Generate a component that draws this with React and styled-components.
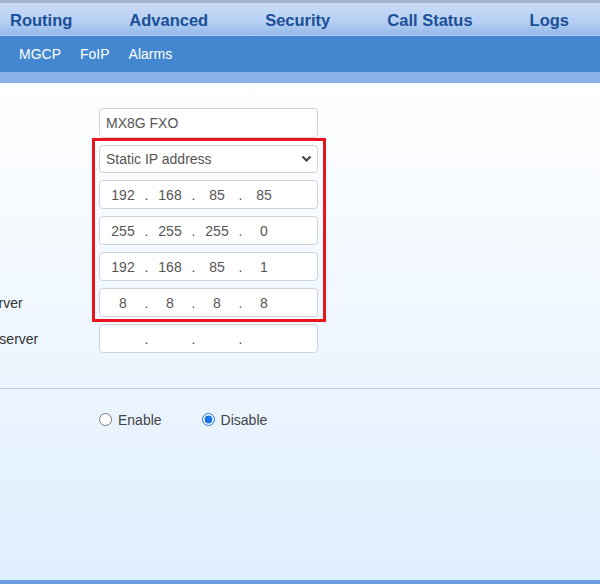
import React from "react";
import styled, { createGlobalStyle } from "styled-components";

const GlobalStyle = createGlobalStyle`
  html, body {
    margin: 0;
    padding: 0;
    height: 100%;
    overflow: hidden;
  }
  body {
    font-family: "Liberation Sans", Arial, sans-serif;
  }
  #root {
    height: 100%;
  }
`;

const topMenu = ["Routing", "Advanced", "Security", "Call Status", "Logs"];
const subMenu = ["MGCP", "FoIP", "Alarms"];

const Page = styled.div`
  display: flex;
  flex-direction: column;
  height: 100%;
  width: 100%;
  overflow: hidden;
  background: linear-gradient(#ffffff 80px, #dfeeff);
`;

const TopNav = styled.div`
  display: flex;
  align-items: center;
  gap: 57px;
  box-sizing: border-box;
  height: 36px;
  padding: 2px 0 0 10px;
  border-top: 3px solid #a3b3c9;
  border-bottom: 1px solid #b4cdef;
  background: linear-gradient(#c9dcf6, #b5cff2 60%, #93b8ea);
  white-space: nowrap;
`;

const TopItem = styled.div`
  font-family: "Liberation Sans", Arial, sans-serif;
  font-weight: 700;
  font-size: 16.5px;
  color: #1b4f98;
`;

const SubNav = styled.div`
  display: flex;
  align-items: center;
  gap: 19px;
  height: 36px;
  padding-left: 19px;
  background: #4287cf;
  border-bottom: 11px solid #8bb3e7;
`;

const SubItem = styled.div`
  font-size: 14px;
  color: #ffffff;
`;

const Content = styled.div`
  flex: 1;
  margin-left: -91px;
`;

const Section = styled.div`
  display: flex;
  flex-direction: column;
  gap: ${(p) => p.gap || 7}px;
  padding: ${(p) => p.pad};
`;

const Row = styled.div`
  display: grid;
  grid-template-columns: 190px 219px;
  align-items: center;
`;

const Label = styled.div`
  font-size: 14px;
  color: #333;
  white-space: nowrap;
  margin-left: ${(p) => p.shift || 0}px;
`;

const Field = styled.div`
  box-sizing: border-box;
  height: ${(p) => p.h || 29}px;
  display: flex;
  align-items: center;
  border: 1px solid #cfd3d8;
  border-radius: 4px;
  background: #fff;
  font-size: 14px;
  color: #555;
  padding-left: ${(p) => (p.ip ? 5 : 6)}px;
  padding-right: 5px;
`;

const SelectText = styled.span`
  flex: 1;
`;

const Octet = styled.span`
  width: 36px;
  text-align: center;
`;

const Dot = styled.span`
  width: 11px;
  text-align: center;
`;

const Highlight = styled.div`
  position: relative;
  display: flex;
  flex-direction: column;
  gap: 7px;
  &::after {
    content: "";
    position: absolute;
    left: 183px;
    width: 234px;
    top: -7px;
    bottom: -5px;
    box-sizing: border-box;
    border: 3px solid #e8141e;
    pointer-events: none;
  }
`;

const Divider = styled.div`
  height: 1px;
  background: #c9ced6;
  margin-left: 91px;
`;

const Radios = styled.div`
  display: flex;
  align-items: center;
  height: 29px;
`;

const RadioLabel = styled.label`
  display: flex;
  align-items: center;
  gap: 6px;
  font-size: 14px;
  color: #444;
  margin-right: ${(p) => p.mr || 0}px;
  input {
    margin: 0;
    width: 13px;
    height: 13px;
    accent-color: #1a73e8;
  }
`;

const BottomBar = styled.div`
  height: 4px;
  background: #6a9ddf;
`;

const Chevron = () => (
  <svg width="11" height="8" viewBox="0 0 11 8">
    <path d="M1.5 1.5 L5.5 5.5 L9.5 1.5" fill="none" stroke="#444" strokeWidth="2.2" />
  </svg>
);

const IpField = ({ parts }) => (
  <Field ip>
    {parts.map((p, i) => (
      <React.Fragment key={i}>
        {i > 0 && <Dot>.</Dot>}
        <Octet>{p}</Octet>
      </React.Fragment>
    ))}
  </Field>
);

const ipRows = [
  { parts: ["192", "168", "85", "85"] },
  { parts: ["255", "255", "255", "0"] },
  { parts: ["192", "168", "85", "1"] },
  { label: "Preferred DNS server", shift: -21, parts: ["8", "8", "8", "8"] },
];

export default function App() {
  return (
    <>
      <GlobalStyle />
      <Page>
        <TopNav>
          {topMenu.map((m) => (
            <TopItem key={m}>{m}</TopItem>
          ))}
        </TopNav>
        <SubNav>
          {subMenu.map((m) => (
            <SubItem key={m}>{m}</SubItem>
          ))}
        </SubNav>
        <Content>
          <Section pad="25px 0 35px 0">
            <Row>
              <Label />
              <Field h={30}>MX8G FXO</Field>
            </Row>
            <Highlight>
              <Row>
                <Label />
                <Field h={28}>
                  <SelectText>Static IP address</SelectText>
                  <Chevron />
                </Field>
              </Row>
              {ipRows.map((r, i) => (
                <Row key={i}>
                  <Label shift={r.shift}>{r.label}</Label>
                  <IpField parts={r.parts} />
                </Row>
              ))}
            </Highlight>
            <Row>
              <Label shift={-3}>Alternate DNS server</Label>
              <IpField parts={["", "", "", ""]} />
            </Row>
          </Section>
          <Divider />
          <Section pad="16px 0 0 0">
            <Row>
              <Label />
              <Radios>
                <RadioLabel mr={40}>
                  <input type="radio" name="opt" /> Enable
                </RadioLabel>
                <RadioLabel>
                  <input type="radio" name="opt" defaultChecked /> Disable
                </RadioLabel>
              </Radios>
            </Row>
          </Section>
        </Content>
        <BottomBar />
      </Page>
    </>
  );
}
